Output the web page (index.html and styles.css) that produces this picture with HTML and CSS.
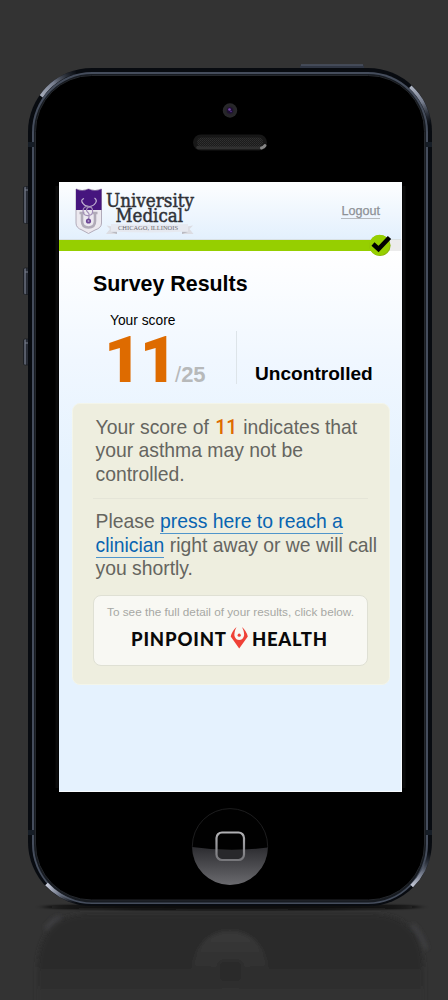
FILE: index.html
```
<!DOCTYPE html>
<html lang="en">
<head>
<meta charset="utf-8">
<title>Survey Results</title>
<link rel="stylesheet" href="styles.css">
</head>
<body>
<div class="stage">
  <svg class="phone" width="448" height="1000" viewBox="0 0 448 1000" aria-hidden="true">
    <defs>
      <linearGradient id="key" x1="0" x2="1" y1="0" y2="0"><stop offset="0" stop-color="#252932"/><stop offset=".3" stop-color="#727887"/><stop offset=".5" stop-color="#252932"/><stop offset="1" stop-color="#30343e"/></linearGradient>
      <linearGradient id="lower" x1="0" x2="0" y1="0" y2="1"><stop offset="0" stop-color="#2c2c30"/><stop offset="1" stop-color="#6a6a6e"/></linearGradient>
      <linearGradient id="ring" x1="0" x2="0" y1="0" y2="1"><stop offset="0" stop-color="#b0b0b3"/><stop offset="1" stop-color="#77777b"/></linearGradient>
      <linearGradient id="mirror" x1="0" x2="0" y1="0" y2="1"><stop offset="0" stop-color="#2a2a2a"/><stop offset=".4" stop-color="#2a2a2a"/><stop offset="1" stop-color="#333333"/></linearGradient>
      <linearGradient id="glint" gradientUnits="userSpaceOnUse" x1="38" y1="98" x2="76" y2="70"><stop offset="0" stop-color="#aeb4c2"/><stop offset=".45" stop-color="#777e8f"/><stop offset="1" stop-color="#3c4350" stop-opacity="0"/></linearGradient>
      <linearGradient id="glint2" gradientUnits="userSpaceOnUse" x1="46" y1="886" x2="76" y2="904"><stop offset="0" stop-color="#c8ccda"/><stop offset=".4" stop-color="#777e8f"/><stop offset="1" stop-color="#3c4350" stop-opacity="0"/></linearGradient>
      <linearGradient id="glint3" gradientUnits="userSpaceOnUse" x1="411" y1="86" x2="429" y2="125"><stop offset="0" stop-color="#aeb4c2"/><stop offset=".45" stop-color="#777e8f"/><stop offset="1" stop-color="#3c4350" stop-opacity="0"/></linearGradient>
      <linearGradient id="glint4" gradientUnits="userSpaceOnUse" x1="412" y1="887" x2="430" y2="852"><stop offset="0" stop-color="#c8ccda"/><stop offset=".45" stop-color="#6b7282"/><stop offset="1" stop-color="#3c4350" stop-opacity="0"/></linearGradient>
      <radialGradient id="lens"><stop offset="0" stop-color="#6a3aa0"/><stop offset=".3" stop-color="#2e1a48"/><stop offset=".5" stop-color="#252428"/><stop offset="1" stop-color="#29292b"/></radialGradient>
      <pattern id="mesh" width="2" height="2" patternUnits="userSpaceOnUse"><rect width="2" height="2" fill="#1b1b1b"/><rect width="1" height="1" fill="#303030"/><rect x="1" y="1" width="1" height="1" fill="#2b2b2b"/></pattern>
      <linearGradient id="halo" x1="0" x2="0" y1="0" y2="1"><stop offset="0" stop-color="#3a3a3a"/><stop offset="1" stop-color="#2e2e2e"/></linearGradient>
      <filter id="soft" filterUnits="userSpaceOnUse" x="0" y="890" width="448" height="140"><feGaussianBlur stdDeviation="2"/></filter>
      <filter id="shade" x="-20%" y="-200%" width="140%" height="500%"><feGaussianBlur stdDeviation="5 1.3"/></filter>
    </defs>

    <g filter="url(#soft)">
      <path d="M37 1010V970Q39 914 88 914H372Q422 914 424 970V1010Z" fill="url(#mirror)"/>
      <path d="M46 929Q51 921 60 917" fill="none" stroke="#404144" stroke-width="4"/>
      <path d="M412 925Q422 935 426 949" fill="none" stroke="#3f4043" stroke-width="4"/>
      <path d="M193 968A37 37 0 0 1 267 968Q230 974 193 968Z" fill="url(#halo)"/>
      <rect x="217" y="959" width="27" height="25" rx="6" fill="#2c2c2c" stroke="#333" stroke-width="3"/>
    </g>
    <ellipse cx="232" cy="907" rx="190" ry="3" fill="#080808" filter="url(#shade)"/>

    <path d="M300 69V66.5Q300 64.5 302 64.5H362Q364 64.5 364 66.5V69Z" fill="#303643"/><path d="M301 65H363" stroke="#586073"/>
    <g stroke="#14171c" stroke-width=".6" fill="url(#key)">
      <rect x="23.500" y="186.500" width="5.500" height="37" rx="1.500"/>
      <rect x="23.500" y="268" width="5.500" height="26.500" rx="1.500"/>
      <rect x="23.500" y="339" width="5.500" height="26" rx="1.500"/>
    </g>
    <path d="M25 190H28M25 272H28M25 343H28" stroke="#777d8b"/>

    <rect x="28" y="68" width="404" height="838" rx="64" fill="#080b10"/>
    <rect x="32" y="72" width="396" height="832" rx="60" fill="#454d5c"/>
    <rect x="34" y="74" width="392" height="828.500" rx="58" fill="#171b21"/>
    <rect x="35.500" y="75.500" width="389" height="824.500" rx="56" fill="#000" stroke="#24272c"/>
    <path d="M41.200 96.400A62 62 0 0 1 75.900 72.100" fill="none" stroke="url(#glint)" stroke-width="3.600"/>
    <path d="M410.300 86.700A62 62 0 0 1 429.600 125" fill="none" stroke="url(#glint3)" stroke-width="3.600"/>
    <path d="M46.500 884A62 62 0 0 0 75.900 901.900" fill="none" stroke="url(#glint2)" stroke-width="3.600"/>
    <path d="M411.700 886A62 62 0 0 0 429.500 852" fill="none" stroke="url(#glint4)" stroke-width="3.600"/>
    <path d="M28 144.500H34M426 144.500H432M28 832.500H34M426 832.500H432" stroke="#161d26" stroke-width="5"/>
    <path d="M57 186V788M404 186V788" stroke="#0b0b0b" stroke-width="3"/>

    <circle cx="230" cy="110.500" r="7.200" fill="url(#lens)"/><circle cx="230" cy="110.500" r="3.200" fill="#1d1130"/><circle cx="229.500" cy="109.500" r="1.300" fill="#7644ad"/><circle cx="231" cy="111.500" r=".8" fill="#583396"/>
    <rect x="193" y="134.500" width="74" height="16" rx="8" fill="#171717"/>
    <path d="M198 147.500H260" stroke="#303030" stroke-width="3.500" stroke-linecap="round"/>
    <rect x="197" y="137.500" width="66" height="9" rx="4.500" fill="url(#mesh)"/>
    <path d="M261.500 148Q264 147.500 265 145.500" stroke="#858585" stroke-width="3" stroke-linecap="round" fill="none"/>

    <circle cx="230" cy="846.300" r="37.700" fill="#010101" stroke="#242426" stroke-width=".8"/>
    <path d="M192.300 847Q230 852.500 267.700 847.500A37.700 37.700 0 0 1 192.300 847Z" fill="url(#lower)"/>
    <path d="M217 849.700H243V854Q243 860 238 860H222Q217 860 217 854Z" fill="#28282b"/>
    <rect x="216.500" y="832.500" width="27.500" height="27.500" rx="5.500" fill="none" stroke="url(#ring)" stroke-width="2.200"/>
  </svg>

  <main class="screen">
    <header class="top">
      <svg class="brand" width="124" height="52" viewBox="0 0 124 52" role="img" aria-label="University Medical, Chicago, Illinois">
        <path d="M1 1Q7 4 13.500 1Q20 4 26.500 1V35Q26.500 40 20 42L13.500 45.500L7 42Q1 40 1 35Z" fill="#ece9ef" stroke="#aaa3b2" stroke-width=".9"/>
        <path d="M1 1Q7 4 13.500 1Q20 4 26.500 1V22H1Z" fill="#46157e"/>
        <path d="M7 25V33Q7 39.500 13.500 39.500Q20 39.500 20 33V25M4.500 25H9.500M17.500 25H22.500" stroke="#b1abb8" stroke-width="2.600" fill="none"/>
        <path d="M9 10.500Q5 12 8 15.500Q10 18.500 14 18.500Q18 18.500 20.500 15Q22.500 12 19.500 10" stroke="#c3b4d3" stroke-width="1.200" fill="none"/>
        <path d="M14 18.500Q8 18 8 23Q8 28 13.500 27.500Q18.500 27 17.500 22Q17 18 13 19.500Q10 22 13 24.500Q15 26 13.500 31" stroke="#a18db7" stroke-width="1.200" fill="none"/>
        <circle cx="13.500" cy="33" r="2.600" fill="#6c4596"/><circle cx="13.500" cy="33" r="1" fill="#ad98c3"/>
        <path d="M37 38.500L31.500 37.500L35 41L31 46H42V43ZM112 38.500L118 37.500L114.500 41L118.500 46H107V43Z" fill="#dcdde3"/>
        <path d="M36 44L42 43.500V46ZM113 44L107 43.500V46Z" fill="#b9bac2"/>
        <path d="M36 36Q74 37.500 113 36V43.500Q74 45.500 36 43.500Z" fill="#e6e9f0"/>
        <text class="brand-name" x="31" y="18.500" textLength="88" lengthAdjust="spacingAndGlyphs">University</text>
        <text class="brand-name" x="40.500" y="33.500" textLength="67.500" lengthAdjust="spacingAndGlyphs">Medical</text>
        <text class="brand-city" x="43" y="42" textLength="60" lengthAdjust="spacingAndGlyphs">CHICAGO, ILLINOIS</text>
      </svg>
      <a class="logout">Logout</a>
    </header>
    <div class="progress">
      <div class="progress-fill"></div>
      <svg class="tick" width="26" height="24" viewBox="0 0 26 24" aria-hidden="true"><circle cx="12" cy="12.500" r="10.600" fill="#8ab50d"/><circle cx="11.500" cy="12" r="10.300" fill="#96cf00"/><path d="M5 11L10.500 16L21.500 4.500" fill="none" stroke="#000" stroke-width="4.500"/></svg>
    </div>
    <section class="results">
      <h1>Survey Results</h1>
      <div class="summary">
        <div class="score">
          <div class="score-label">Your score</div>
          <div class="score-value"><span class="points">11</span><span class="total"><span class="slash">/</span>25</span></div>
        </div>
        <div class="status">Uncontrolled</div>
      </div>
      <div class="card">
        <p>Your score of <span class="mark">11</span> indicates that<br>your asthma may not be<br>controlled.</p>
        <p class="action">Please <a class="reach">press here to reach a</a><br><a class="reach">clinician</a> right away or we will call<br>you shortly.</p>
        <div class="detail">
          <div class="hint">To see the full detail of your results, click below.</div>
          <svg class="pinpoint" width="200" height="24" viewBox="0 0 200 24" role="img" aria-label="Pinpoint Health">
            <text x="0" y="18.500" textLength="95" lengthAdjust="spacing">PINPOINT</text>
            <path d="M105.500 0Q101 4 99.700 9.500L108.200 21.500L116.800 9.500Q115.500 4 111 0Q114 6 112.800 9.500Q111.500 13 108.200 13Q105 13 103.700 9.500Q102.500 6 105.500 0Z" fill="#ef4136"/>
            <circle cx="108.200" cy="8.200" r="1.600" fill="#ef4136"/>
            <text x="121" y="18.500" textLength="75" lengthAdjust="spacing">HEALTH</text>
          </svg>
        </div>
      </div>
    </section>
  </main>
</div>
</body>
</html>
```
FILE: styles.css
```
* { box-sizing: border-box; }
body { margin: 0; background: #333; font-family: "Liberation Sans", Arial, sans-serif; }
.stage { position: relative; width: 448px; height: 1000px; padding: 182px 0 0 59px; overflow: hidden; }
.phone { position: absolute; inset: 0; }
.screen { position: relative; width: 343px; height: 610px; overflow: hidden; background: #e5f2fe; border: solid #f8fbff; border-width: 0 1px 1px 0; }
.top { display: flex; justify-content: space-between; height: 58px; padding: 6px 21px 0 16px; background: linear-gradient(#fdfeff, #e3f0fd); border-bottom: 1px solid #d9e1e4; }
.brand { overflow: visible; }
.brand-name { font: 18.5px "DejaVu Serif", serif; fill: #303237; stroke: #303237; stroke-width: .5px; }
.brand-city { font: 6.5px "Liberation Serif", serif; fill: #6a6a70; }
.logout { align-self: flex-start; margin-top: 16px; font-size: 12.6px; line-height: 14px; color: #8d9196; -webkit-text-stroke: .25px #8d9196; border-bottom: 1px solid #b5babf; }
.progress { position: relative; height: 11px; background: #ececec; }
.progress-fill { width: 320px; height: 11px; background: #96cf00; }
.tick { position: absolute; left: 309px; top: -7px; }
.results { height: 541px; padding: 19px 0 0 13px; background: linear-gradient(#fff, #f0f7ff 110px, #e5f2fe 220px); }
h1 { margin: 0 0 0 21px; font-size: 21.4px; line-height: 28px; }
.summary { display: flex; height: 105px; padding: 14px 0 0 35px; }
.score { width: 129px; }
.score-label { padding-left: 3px; font-size: 13.8px; line-height: 18px; }
.score-value { display: flex; align-items: baseline; height: 58px; line-height: 61px; font-weight: bold; }
.points { width: 68px; font-family: Roboto, sans-serif; font-size: 65px; font-weight: 900; letter-spacing: -2px; margin-left: -3px; margin-right: 3px; color: #de6b00; }
.total { font-size: 22px; color: #b7b9ba; }
.slash { font-weight: normal; }
.status { height: 53px; margin-top: 19px; padding: 31px 0 0 18px; border-left: 1px solid #dde4e9; font-size: 19.1px; line-height: 24px; font-weight: bold; }
.card { width: 318px; height: 282px; padding: 12px 0 0 20px; background: #eeeedf; border: 1px solid #f3f5ea; border-radius: 8px; }
p { width: 285px; margin: 0; padding-left: 2.5px; font-size: 19.35px; line-height: 23.4px; color: #65655f; white-space: nowrap; }
.mark { font-family: Roboto, sans-serif; font-weight: 500; letter-spacing: .2px; margin: 0 .3px 0 1px; color: #de6b00; }
.action { position: relative; margin-top: 24px; }
.action::before { content: ""; position: absolute; left: 0; top: -12px; width: 275px; height: 1px; background: #e5e5d8; }
.reach { color: #0864b1; padding-bottom: 1px; border-bottom: 1.5px solid #4f95cb; }
.detail { width: 275px; height: 71px; margin-top: 15px; padding-top: 8px; background: #f8f8f3; border: 1px solid #dfe0d4; border-radius: 8px; text-align: center; }
.hint { font-size: 11.75px; line-height: 15px; color: #a7a8a4; white-space: nowrap; }
.pinpoint { display: block; margin: 8px 0 0 37px; overflow: visible; }
.pinpoint text { font: 900 18.5px Lato, sans-serif; fill: #090909; }
```
